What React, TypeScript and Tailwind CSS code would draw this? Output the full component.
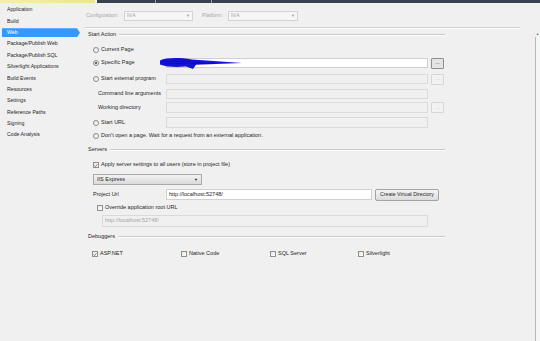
import React from "react";

const sideItems = [
	"Application",
	"Build",
	"Web",
	"Package/Publish Web",
	"Package/Publish SQL",
	"Silverlight Applications",
	"Build Events",
	"Resources",
	"Settings",
	"Reference Paths",
	"Signing",
	"Code Analysis",
];

function Sidebar() {
	return (
		<div className="w-[85px] pt-[1.3px] flex flex-col text-[5.2px]">
			{sideItems.map((item) =>
				item === "Web" ? (
					<div key={item} className="h-[11.36px] flex items-center">
						<div className="ml-[2px] w-[78px] h-[9px] bg-[#3399ff] text-white pl-[5px] flex items-center [clip-path:polygon(0_0,75px_0,78px_50%,75px_100%,0_100%)]">
							{item}
						</div>
					</div>
				) : (
					<div key={item} className="h-[11.36px] flex items-center pl-[7px]">
						{item}
					</div>
				)
			)}
		</div>
	);
}

function Header({ title, mt }: { title: string; mt: string }) {
	return (
		<div className={`${mt} h-[10px] w-[360px] flex items-center pl-[3px]`}>
			<span>{title}</span>
			<div className="flex-1 ml-[3px] h-[2px] border-t border-[#c9c9c9] border-b border-b-white" />
		</div>
	);
}

function Radio({ checked, label }: { checked?: boolean; label: string }) {
	return (
		<div className="flex items-center">
			<div className="w-[6px] h-[6px] rounded-full border-[0.8px] border-[#8b8b8b] bg-gradient-to-br from-[#e4e4e4] to-white flex items-center justify-center">
				{checked && <div className="w-[2.6px] h-[2.6px] rounded-full bg-[#3a3a3a]" />}
			</div>
			<span className="ml-[2px]">{label}</span>
		</div>
	);
}

function Check({ checked, label }: { checked?: boolean; label: string }) {
	return (
		<div className="flex items-center">
			<div className="w-[6px] h-[6px] border-[0.8px] border-[#8e8f8f] bg-gradient-to-br from-[#e6e6e6] to-white flex items-center justify-center">
				{checked && (
					<svg viewBox="0 0 8 8" className="w-[5px] h-[5px]">
						<path d="M1.2 4.2 L3.1 6.2 L6.8 1.6" fill="none" stroke="#3c3c3c" strokeWidth="1.3" />
					</svg>
				)}
			</div>
			<span className="ml-[2px]">{label}</span>
		</div>
	);
}

function TextBox({ w, enabled, value, h = "h-full" }: { w: string; enabled?: boolean; value?: string; h?: string }) {
	return (
		<div
			className={`${w} ${h} border ${
				enabled ? "border-[#d0d0d0] bg-white text-[#1e1e1e]" : "border-[#dadada] bg-[#f0f0f0] text-[#a5a5a5]"
			} flex items-center pl-[2px]`}
		>
			{value}
		</div>
	);
}

function Dots({ enabled }: { enabled?: boolean }) {
	return (
		<div
			className={`ml-[3px] w-[13px] h-[11px] border rounded-[1px] flex items-center justify-center leading-none ${
				enabled ? "border-[#8f8f8f] bg-[#e4e4e4] text-[#333]" : "border-[#d6d6d6] bg-[#f2f2f2] text-[#c4c4c4]"
			}`}
		>
			...
		</div>
	);
}

function Select({ w, value }: { w: string; value: string }) {
	return (
		<div className={`${w} h-full border border-[#d2d2d2] bg-[#f6f6f6] text-[#a8a8a8] flex items-center justify-between px-[2px]`}>
			<span>{value}</span>
			<span className="text-[4px] text-[#9a9a9a]">▼</span>
		</div>
	);
}

function Main() {
	return (
		<div className="w-[450px] flex flex-col text-[5.5px]">
			<div className="mt-[8px] h-[10px] flex items-center pl-[1px] text-[#a8a8a8] text-[5.2px]">
				<span className="w-[38px]">Configuration:</span>
				<Select w="w-[69px]" value="N/A" />
				<span className="ml-[9px] w-[26px]">Platform:</span>
				<Select w="w-[70px]" value="N/A" />
			</div>
			<div className="mt-[6px] w-[435px] h-[2px] border-t border-[#d3d3d3] border-b border-b-white" />

			<Header title="Start Action" mt="mt-[1px]" />
			<div className="mt-[5px] h-[10px] flex items-center pl-[8px]">
				<Radio label="Current Page" />
			</div>
			<div className="mt-[3px] h-[10px] flex items-center pl-[8px]">
				<div className="w-[73px]">
					<Radio checked label="Specific Page" />
				</div>
				<TextBox w="w-[262px]" enabled />
				<Dots enabled />
			</div>
			<div className="mt-[6px] h-[10px] flex items-center pl-[8px]">
				<div className="w-[73px]">
					<Radio label="Start external program" />
				</div>
				<TextBox w="w-[262px]" />
				<Dots />
			</div>
			<div className="mt-[5px] h-[10px] flex items-center pl-[8px]">
				<div className="w-[73px] pl-[5px]">Command line arguments</div>
				<TextBox w="w-[262px]" />
			</div>
			<div className="mt-[3px] h-[11px] flex items-center pl-[8px]">
				<div className="w-[73px] pl-[5px]">Working directory</div>
				<TextBox w="w-[262px]" />
				<Dots />
			</div>
			<div className="mt-[4px] h-[11px] flex items-center pl-[8px]">
				<div className="w-[73px]">
					<Radio label="Start URL" />
				</div>
				<TextBox w="w-[262px]" />
			</div>
			<div className="mt-[3px] h-[10px] flex items-center pl-[8px]">
				<Radio label="Don't open a page.  Wait for a request from an external application." />
			</div>

			<Header title="Servers" mt="mt-[4px]" />
			<div className="mt-[5px] h-[10px] flex items-center pl-[8px]">
				<Check checked label="Apply server settings to all users (store in project file)" />
			</div>
			<div className="mt-[4px] h-[11px] flex items-center pl-[8px]">
				<div className="w-[109px] h-full border border-[#a9a9a9] bg-gradient-to-b from-[#f3f3f3] to-[#dadada] flex items-center justify-between px-[3px]">
					<span>IIS Express</span>
					<span className="text-[4px]">▼</span>
				</div>
			</div>
			<div className="mt-[4px] h-[11px] flex items-center pl-[8px]">
				<div className="w-[73px]">Project Url</div>
				<TextBox w="w-[206px]" enabled value="http://localhost:52748/" />
				<div className="ml-[3px] w-[64px] h-[12px] border border-[#a3a3a3] rounded-[2px] bg-gradient-to-b from-[#f5f5f5] to-[#dcdcdc] flex items-center justify-center text-[5.2px]">
					Create Virtual Directory
				</div>
			</div>
			<div className="mt-[3px] h-[10px] flex items-center pl-[12px]">
				<Check label="Override application root URL" />
			</div>
			<div className="mt-[2px] h-[12px] flex items-center pl-[17px]">
				<TextBox w="w-[326px]" value="http://localhost:52748/" />
			</div>

			<Header title="Debuggers" mt="mt-[5px]" />
			<div className="mt-[7px] h-[10px] flex items-center pl-[7px]">
				<div className="w-[89px]">
					<Check checked label="ASP.NET" />
				</div>
				<div className="w-[89px]">
					<Check label="Native Code" />
				</div>
				<div className="w-[88px]">
					<Check label="SQL Server" />
				</div>
				<Check label="Silverlight" />
			</div>
		</div>
	);
}

function Scrollbar() {
	return (
		<div className="w-[5px] flex flex-col items-stretch">
			<div className="mt-[30px] h-[4px] text-[3.5px] leading-none text-[#777] text-center">▲</div>
			<div className="flex-1 border-l border-[#b8b8b8] bg-[#f6f6f6]" />
		</div>
	);
}

export default function App() {
	return (
		<div className="relative w-[540px] h-[341px] overflow-hidden bg-[#f0f0f0] text-[#262626] leading-none font-['Liberation_Sans',Arial,sans-serif]">
			<div className="flex h-[3px]">
				<div className="w-[95px] bg-gradient-to-r from-[#f4f0a8] to-[#ece68e]" />
				<div className="w-[2px] bg-[#f4f4f4]" />
				<div className="flex-1 bg-[#3a414e] flex">
					<div className="w-[58px]" />
					<div className="w-[1px] bg-[#9aa0a8]" />
					<div className="w-[55px]" />
					<div className="w-[1px] bg-[#9aa0a8]" />
				</div>
			</div>
			<div className="flex h-[338px]">
				<Sidebar />
				<Main />
				<Scrollbar />
			</div>
			<svg className="absolute left-0 top-0 pointer-events-none" width="540" height="341" viewBox="0 0 540 341">
				<path
					d="M160 60.5 C166 57.5 180 57.5 192 59.5 L242 63 L196 64.8 L193 69 L186 66.5 C176 67.5 166 67 160 64.5 Z"
					fill="#1414d6"
				/>
				<path d="M162 62 C175 60 188 61 200 62.5 M164 64 C176 63 190 63.5 215 63.5" stroke="#0a0ab0" strokeWidth="0.8" fill="none" />
			</svg>
		</div>
	);
}
